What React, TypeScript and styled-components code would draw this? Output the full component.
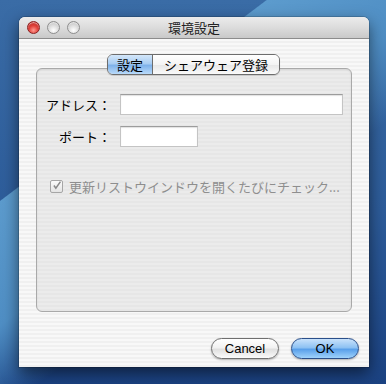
import React from "react";
import styled, { createGlobalStyle } from "styled-components";

const GlobalStyle = createGlobalStyle`
  html, body {
    margin: 0;
    padding: 0;
    width: 386px;
    height: 384px;
    overflow: hidden;
  }
  body {
    font-family: "Noto Sans CJK JP", "Liberation Sans", sans-serif;
    background:
      linear-gradient(143deg, transparent 0, transparent 160px, #5c9bcd 161px, #4f8ec4 260px, rgba(60, 110, 170, 0) 330px),
      linear-gradient(180deg, #3a6ca6 0%, #2d5c9a 55%, #1b4282 100%);
  }
`;

const Desktop = styled.div`
  padding: 17px 0 0 19px;
`;

const Window = styled.div`
  width: 350px;
  height: 350px;
  display: flex;
  flex-direction: column;
  border-radius: 6px 6px 0 0;
  background: repeating-linear-gradient(180deg, #f0f0f0 0, #f0f0f0 2px, #f8f8f8 2px, #f8f8f8 4px);
  box-shadow: 0 6px 16px rgba(0, 0, 0, 0.55), 0 0 0 1px rgba(0, 0, 0, 0.15);
`;

const TitleBar = styled.div`
  height: 21px;
  display: flex;
  align-items: center;
  padding: 0 8px;
  position: relative;
  border-radius: 6px 6px 0 0;
  background: linear-gradient(180deg, #ececec 0%, #dcdcdc 50%, #c9c9c9 100%);
  border-bottom: 1px solid #8c8c8c;
`;

const Lights = styled.div`
  display: flex;
  gap: 7px;
`;

const Light = styled.span<{ $red?: boolean }>`
  width: 13px;
  height: 13px;
  border-radius: 50%;
  box-sizing: border-box;
  border: 1px solid ${(p) => (p.$red ? "#8a2020" : "#8e8e8e")};
  background: ${(p) =>
    p.$red
      ? "radial-gradient(circle at 50% 75%, #ff9a90 0%, #e0413a 45%, #b11d1a 100%)"
      : "radial-gradient(circle at 50% 75%, #ffffff 0%, #dcdcdc 50%, #b4b4b4 100%)"};
  box-shadow: inset 0 1px 1px rgba(255, 255, 255, 0.6);
`;

const Title = styled.div`
  position: absolute;
  left: 0;
  right: 0;
  text-align: center;
  font-size: 13px;
  color: #222;
  pointer-events: none;
`;

const Body = styled.div`
  flex: 1;
  display: flex;
  flex-direction: column;
  padding: 15px 17px 0;
`;

const Tabs = styled.div`
  align-self: center;
  display: flex;
  height: 19px;
  margin-bottom: -7px;
  margin-left: -1px;
  position: relative;
  z-index: 1;
  border: 1px solid #6d6d6d;
  border-radius: 6px;
  overflow: hidden;
  box-shadow: 0 1px 1px rgba(0, 0, 0, 0.15);
`;

const Tab = styled.div<{ $active?: boolean }>`
  display: flex;
  align-items: center;
  justify-content: center;
  padding: 0 ${(p) => (p.$active ? "9px" : "11px")};
  font-size: 13px;
  color: #000;
  border-left: ${(p) => (p.$active ? "none" : "1px solid #6d6d6d")};
  background: ${(p) =>
    p.$active
      ? "linear-gradient(180deg, #d4e7fa 0%, #a9cdf2 45%, #7fb2ea 55%, #b9dafa 100%)"
      : "linear-gradient(180deg, #ffffff 0%, #f4f4f4 50%, #e8e8e8 55%, #fafafa 100%)"};
`;

const Box = styled.div`
  height: 244px;
  box-sizing: border-box;
  border: 1px solid #a9a9a9;
  border-radius: 6px;
  background: repeating-linear-gradient(180deg, #e6e6e6 0, #e6e6e6 2px, #ebebeb 2px, #ebebeb 4px);
  box-shadow: inset 0 1px 2px rgba(0, 0, 0, 0.08);
  padding: 25px 8px 0 0;
  display: flex;
  flex-direction: column;
`;

const Row = styled.div`
  display: flex;
  align-items: center;
  margin-bottom: 11px;
`;

const Label = styled.label`
  width: 74px;
  text-align: right;
  font-size: 13px;
  color: #000;
  margin-right: 9px;
`;

const Field = styled.div<{ $w?: number }>`
  height: 21px;
  box-sizing: border-box;
  flex: ${(p) => (p.$w ? "0 0 auto" : "1")};
  width: ${(p) => (p.$w ? `${p.$w}px` : "auto")};
  background: #fff;
  border: 1px solid #c4c4c4;
  border-top-color: #9c9c9c;
  box-shadow: inset 0 1px 1px rgba(0, 0, 0, 0.12);
`;

const CheckRow = styled.div`
  display: flex;
  align-items: center;
  gap: 6px;
  margin: 19px 0 0 13px;
  font-size: 13px;
  color: #8e8e8e;
`;

const CheckBox = styled.span`
  width: 13px;
  height: 13px;
  box-sizing: border-box;
  border: 1px solid #a6a6a6;
  border-radius: 2px;
  background: linear-gradient(180deg, #fbfbfb, #e4e4e4);
  display: flex;
  align-items: center;
  justify-content: center;
  overflow: visible;
`;

const Footer = styled.div`
  display: flex;
  justify-content: flex-end;
  gap: 12px;
  margin: 26px -7px 0 0;
`;

const Button = styled.div<{ $primary?: boolean }>`
  width: 68px;
  height: 21px;
  box-sizing: border-box;
  border-radius: 11px;
  display: flex;
  align-items: center;
  justify-content: center;
  font-family: "Liberation Sans", Arial, sans-serif;
  font-size: 13px;
  color: #000;
  border: 1px solid ${(p) => (p.$primary ? "#2a4f8a" : "#6f6f6f")};
  background: ${(p) =>
    p.$primary
      ? "linear-gradient(180deg, #c9e2fb 0%, #8ec2f3 45%, #5aa0ea 55%, #9fd2fb 100%)"
      : "linear-gradient(180deg, #ffffff 0%, #f2f2f2 45%, #e0e0e0 55%, #fbfbfb 100%)"};
  box-shadow: 0 1px 2px rgba(0, 0, 0, 0.3);
`;

const App: React.FC = () => {
  return (
    <>
      <GlobalStyle />
      <Desktop>
        <Window>
          <TitleBar>
            <Lights>
              <Light $red />
              <Light />
              <Light />
            </Lights>
            <Title>環境設定</Title>
          </TitleBar>
          <Body>
            <Tabs>
              <Tab $active>設定</Tab>
              <Tab>シェアウェア登録</Tab>
            </Tabs>
            <Box>
              <Row>
                <Label>アドレス：</Label>
                <Field />
              </Row>
              <Row>
                <Label>ポート：</Label>
                <Field $w={78} />
              </Row>
              <CheckRow>
                <CheckBox>
                  <svg width="13" height="13" viewBox="0 0 13 13" style={{ marginTop: -3, marginLeft: 1 }}>
                    <path d="M2.5 6.5 L5 10 L11 1.5" fill="none" stroke="#8a8a8a" strokeWidth="2" />
                  </svg>
                </CheckBox>
                更新リストウインドウを開くたびにチェック...
              </CheckRow>
            </Box>
            <Footer>
              <Button>Cancel</Button>
              <Button $primary>OK</Button>
            </Footer>
          </Body>
        </Window>
      </Desktop>
    </>
  );
};

export default App;
